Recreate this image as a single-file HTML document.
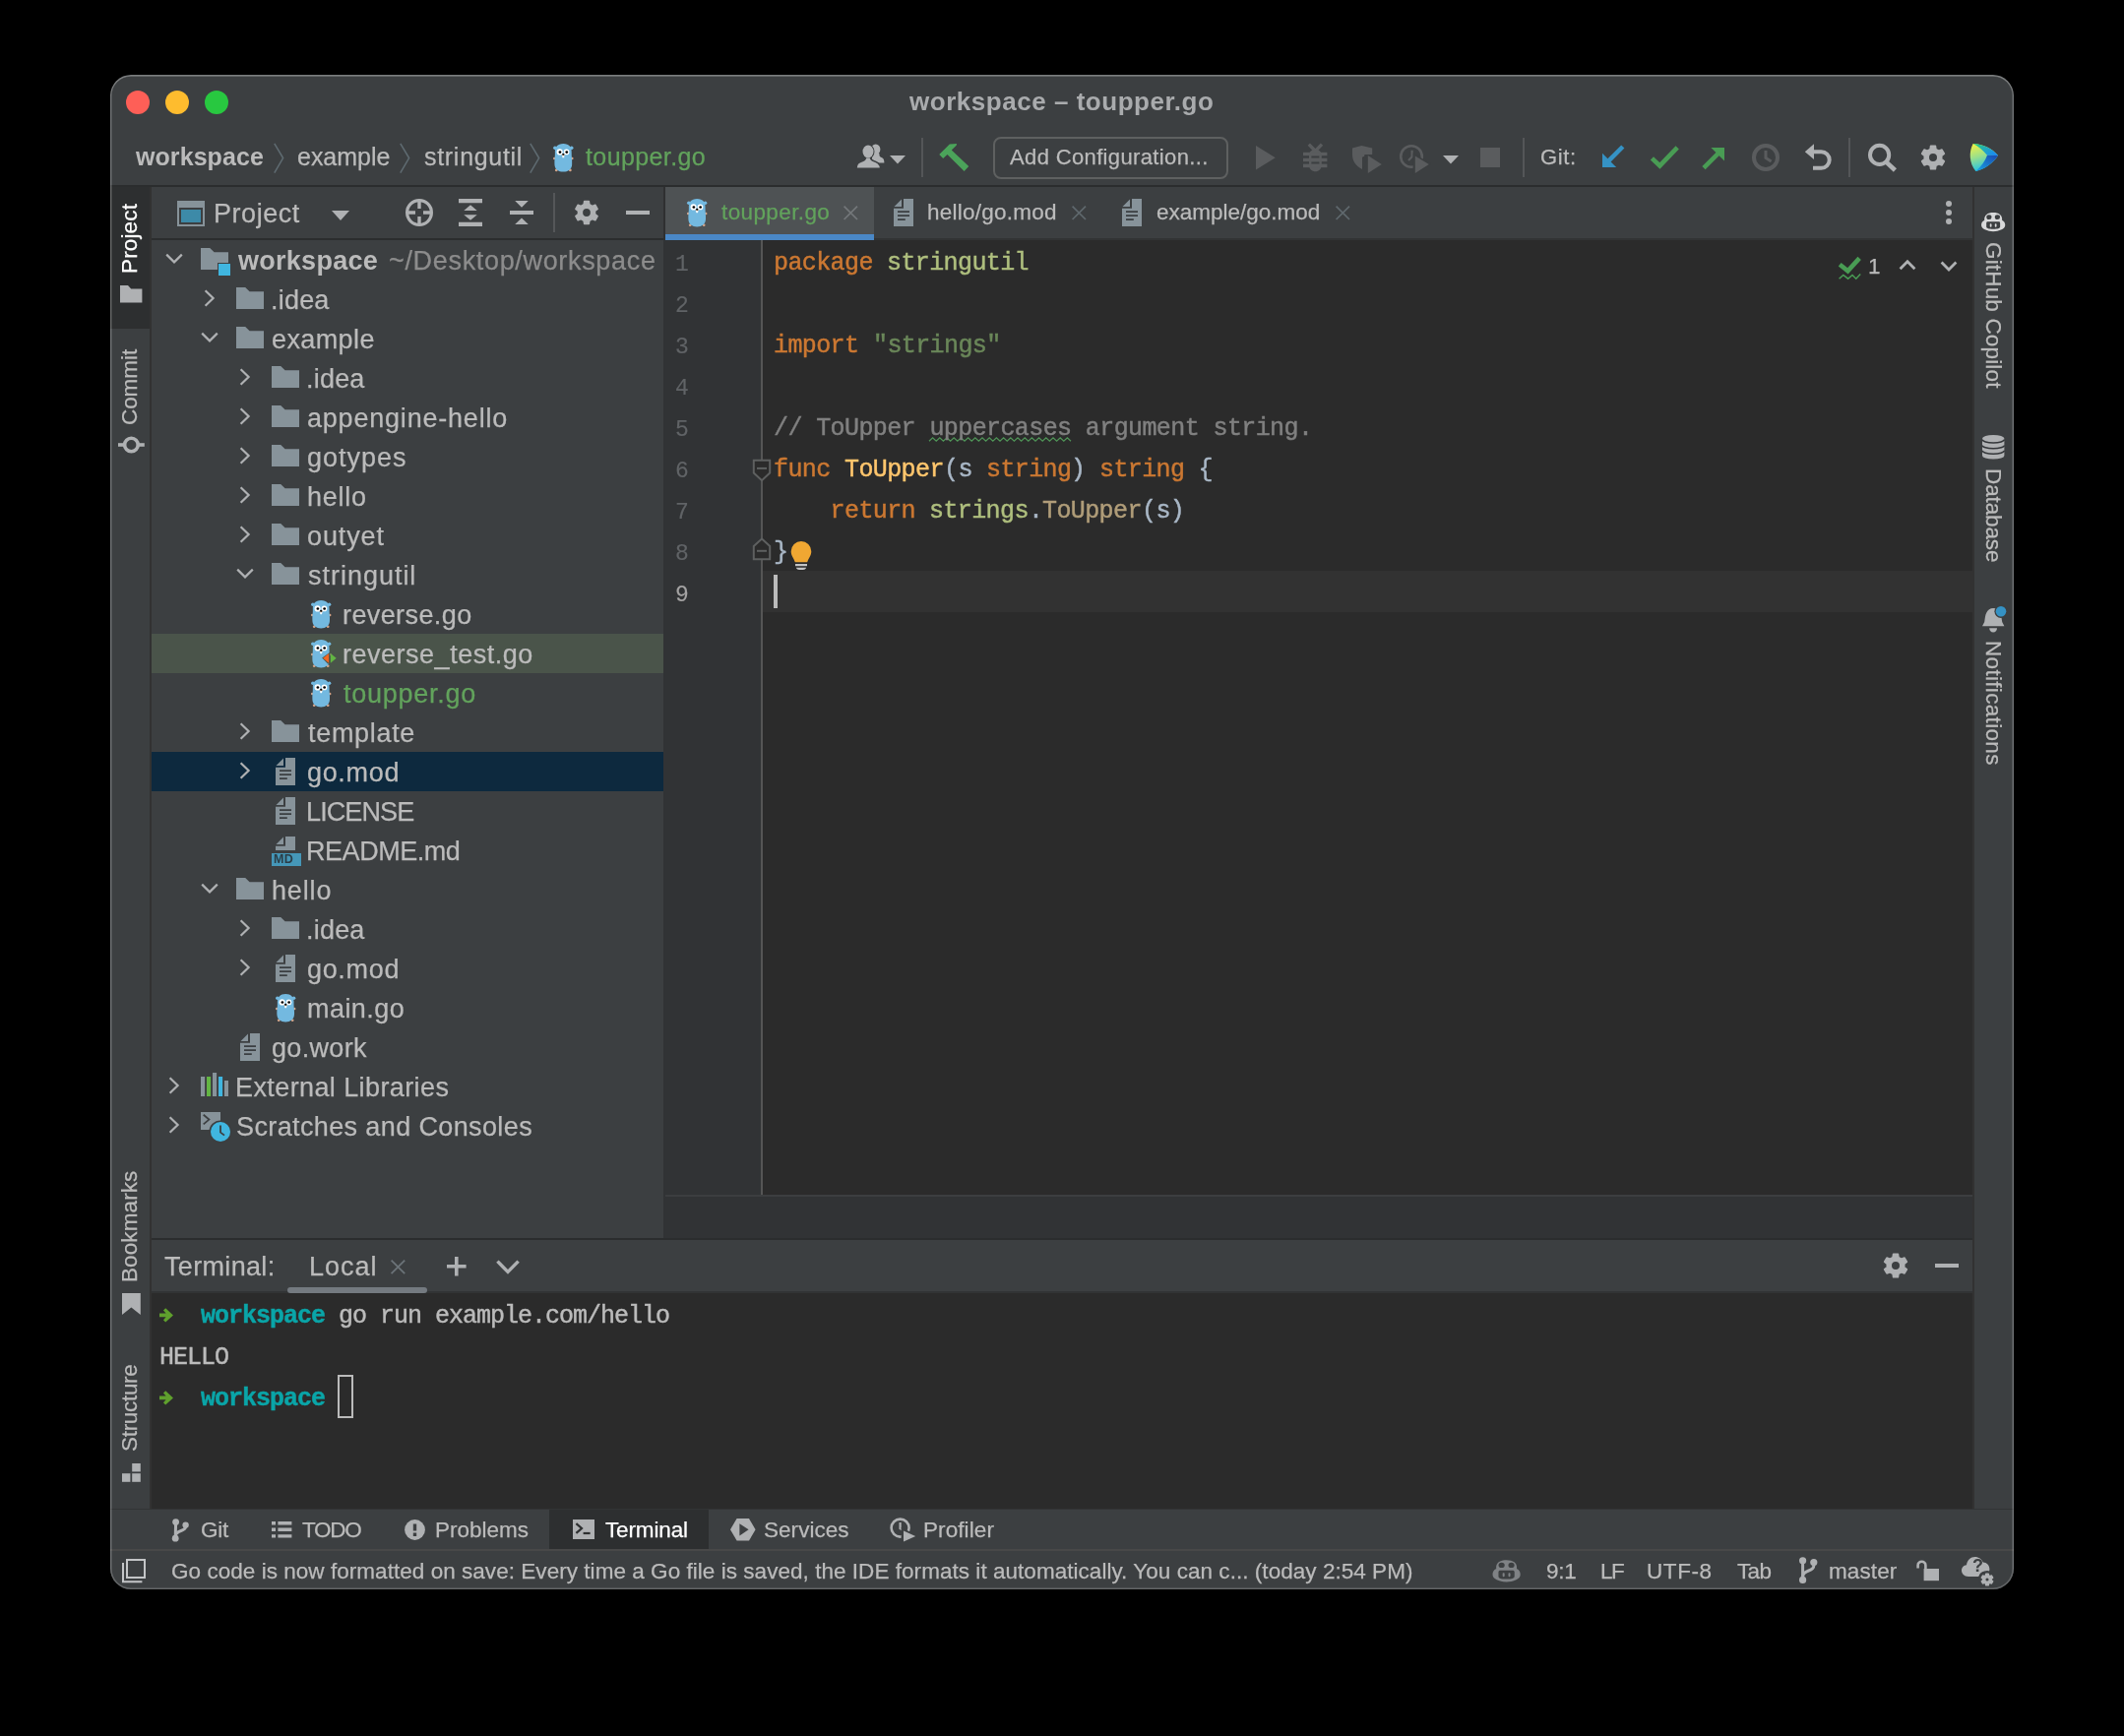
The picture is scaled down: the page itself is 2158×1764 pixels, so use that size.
<!DOCTYPE html>
<html><head><meta charset="utf-8"><title>workspace – toupper.go</title>
<style>
html,body{margin:0;padding:0;background:#000;}
body{width:2158px;height:1764px;overflow:hidden;position:relative;font-family:"Liberation Sans", sans-serif;}
#win{position:absolute;left:112px;top:76px;width:1934px;height:1539px;border-radius:21px;overflow:hidden;background:#3c3f41;}
#pg{position:absolute;left:-112px;top:-76px;width:2158px;height:1764px;}
.t{position:absolute;white-space:pre;line-height:40px;height:40px;will-change:transform;-webkit-text-stroke:0.25px currentColor;}
.m{font-family:"Liberation Mono", monospace;-webkit-text-stroke:0.45px currentColor;}
svg{position:absolute;overflow:visible;}
</style></head><body>
<div id="win"><div id="pg">
<div style="position:absolute;left:112px;top:188px;width:1934px;height:2px;background:#2b2d2e;"></div>
<div style="position:absolute;left:112px;top:190px;width:40px;height:1344px;background:#3c3f41;"></div>
<div style="position:absolute;left:112px;top:190px;width:40px;height:144px;background:#2d2f30;"></div>
<div style="position:absolute;left:152px;top:190px;width:2px;height:1344px;background:#323232;"></div>
<div style="position:absolute;left:154px;top:190px;width:520px;height:52px;background:#3c3f41;"></div>
<div style="position:absolute;left:154px;top:242px;width:520px;height:2px;background:#2b2d2e;"></div>
<div style="position:absolute;left:154px;top:244px;width:520px;height:1014px;background:#3c3f41;"></div>
<div style="position:absolute;left:674px;top:190px;width:2px;height:54px;background:#2f3031;"></div>
<div style="position:absolute;left:674px;top:244px;width:2px;height:1016px;background:#313335;"></div>
<div style="position:absolute;left:676px;top:190px;width:1328px;height:54px;background:#3c3f41;"></div>
<div style="position:absolute;left:676px;top:190px;width:212px;height:48px;background:#4e5254;"></div>
<div style="position:absolute;left:676px;top:238px;width:212px;height:6px;background:#4a88c7;"></div>
<div style="position:absolute;left:676px;top:244px;width:1328px;height:970px;background:#2b2b2b;"></div>
<div style="position:absolute;left:676px;top:244px;width:97px;height:970px;background:#313335;"></div>
<div style="position:absolute;left:773px;top:244px;width:2px;height:970px;background:#555555;"></div>
<div style="position:absolute;left:775px;top:580px;width:1229px;height:42px;background:#323232;"></div>
<div style="position:absolute;left:676px;top:1214px;width:1328px;height:2px;background:#3c3e40;"></div>
<div style="position:absolute;left:676px;top:1216px;width:1328px;height:42px;background:#313335;"></div>
<div style="position:absolute;left:154px;top:1258px;width:1850px;height:2px;background:#2b2d2e;"></div>
<div style="position:absolute;left:154px;top:1260px;width:1850px;height:52px;background:#3c3f41;"></div>
<div style="position:absolute;left:154px;top:1312px;width:1850px;height:2px;background:#323435;"></div>
<div style="position:absolute;left:154px;top:1314px;width:1850px;height:220px;background:#2b2b2b;"></div>
<div style="position:absolute;left:2004px;top:190px;width:2px;height:1344px;background:#323232;"></div>
<div style="position:absolute;left:2006px;top:190px;width:40px;height:1344px;background:#3c3f41;"></div>
<div style="position:absolute;left:112px;top:1533px;width:1934px;height:1px;background:#323435;"></div>
<div style="position:absolute;left:112px;top:1534px;width:1934px;height:40px;background:#3c3f41;"></div>
<div style="position:absolute;left:112px;top:1575px;width:1934px;height:40px;background:#3c3f41;"></div>
<svg style="left:180px;top:204px" width="28" height="26" viewBox="0 0 28 26"><path d="M0,0 H28 V26 H0 Z M2,7 V24 H26 V7 Z" fill="#87939a" fill-rule="evenodd"/><rect x="4" y="9" width="20" height="13" fill="#3d8aa8"/></svg>
<svg style="left:337px;top:214px" width="18" height="10" viewBox="0 0 18 10"><path d="M0,0 H18 L9,10 Z" fill="#afb1b3"/></svg>
<svg style="left:412px;top:202px" width="28" height="28" viewBox="0 0 28 28"><circle cx="14" cy="14" r="12.4" fill="none" stroke="#afb1b3" stroke-width="3.2"/><path d="M12.3,2 h3.4 v8 h-3.4 Z M12.3,18 h3.4 v8 h-3.4 Z M2,12.3 v3.4 h8 v-3.4 Z M18,12.3 v3.4 h8 v-3.4 Z" fill="#afb1b3"/></svg>
<svg style="left:466px;top:202px" width="24" height="28" viewBox="0 0 24 28"><path d="M0,0 H24 V4.2 H0 Z M0,23.8 H24 V28 H0 Z M12,6.3 L18.7,12 H5.3 Z M12,21.8 L18.7,16.2 H5.3 Z" fill="#afb1b3"/></svg>
<svg style="left:518px;top:202px" width="24" height="28" viewBox="0 0 24 28"><path d="M0,12 H24 V16 H0 Z M5.2,2 H18.8 L12,8.8 Z M12,19.4 L18.8,26 H5.2 Z" fill="#afb1b3"/></svg>
<div style="position:absolute;left:562px;top:196px;width:2px;height:40px;background:#555759;"></div>
<svg style="left:583px;top:203px" width="26" height="26" viewBox="-13 -13 26 26"><path d="M-2.81,-8.19 L-2.32,-11.47 L2.32,-11.47 L2.81,-8.19 L5.69,-6.53 L8.77,-7.75 L11.09,-3.72 L8.50,-1.67 L8.50,1.67 L11.09,3.72 L8.77,7.75 L5.69,6.53 L2.81,8.19 L2.32,11.47 L-2.32,11.47 L-2.81,8.19 L-5.69,6.53 L-8.77,7.75 L-11.09,3.72 L-8.50,1.67 L-8.50,-1.67 L-11.09,-3.72 L-8.77,-7.75 L-5.69,-6.53 Z M4.68,0 A4.68,4.68 0 1,0 -4.68,0 A4.68,4.68 0 1,0 4.68,0 Z" fill="#afb1b3" fill-rule="evenodd" stroke="#afb1b3" stroke-width="1.6" stroke-linejoin="round"/></svg>
<div style="position:absolute;left:636px;top:214px;width:24px;height:4.4px;background:#afb1b3;"></div>
<div style="position:absolute;left:154px;top:644px;width:520px;height:40px;background:#4a544a;"></div>
<div style="position:absolute;left:154px;top:764px;width:520px;height:40px;background:#0d293e;"></div>
<svg style="left:167px;top:256.5px" width="20" height="12" viewBox="0 0 20 12"><path d="M2.2,1.6 L10,9.4 L17.8,1.6" fill="none" stroke="#afb1b3" stroke-width="2.2"/></svg>
<svg style="left:204px;top:252px" width="28" height="22" viewBox="0 0 28 22"><path d="M0,0 H9.2 L13.6,4.2 H28 V22 H0 Z" fill="#87939a"/></svg>
<div style="position:absolute;left:220.5px;top:266.5px;width:15px;height:15px;background:#3c3f41;"></div>
<div style="position:absolute;left:222px;top:268px;width:12px;height:12px;background:#40b6e0;"></div>
<svg style="left:206.6px;top:293.1px" width="12" height="20" viewBox="0 0 12 20"><path d="M1.6,2.2 L9.6,10 L1.6,17.8" fill="none" stroke="#afb1b3" stroke-width="2.2"/></svg>
<svg style="left:240px;top:292px" width="28" height="22" viewBox="0 0 28 22"><path d="M0,0 H9.2 L13.6,4.2 H28 V22 H0 Z" fill="#87939a"/></svg>
<svg style="left:202.6px;top:336.5px" width="20" height="12" viewBox="0 0 20 12"><path d="M2.2,1.6 L10,9.4 L17.8,1.6" fill="none" stroke="#afb1b3" stroke-width="2.2"/></svg>
<svg style="left:240px;top:332px" width="28" height="22" viewBox="0 0 28 22"><path d="M0,0 H9.2 L13.6,4.2 H28 V22 H0 Z" fill="#87939a"/></svg>
<svg style="left:242.6px;top:373.1px" width="12" height="20" viewBox="0 0 12 20"><path d="M1.6,2.2 L9.6,10 L1.6,17.8" fill="none" stroke="#afb1b3" stroke-width="2.2"/></svg>
<svg style="left:276px;top:372px" width="28" height="22" viewBox="0 0 28 22"><path d="M0,0 H9.2 L13.6,4.2 H28 V22 H0 Z" fill="#87939a"/></svg>
<svg style="left:242.6px;top:413.1px" width="12" height="20" viewBox="0 0 12 20"><path d="M1.6,2.2 L9.6,10 L1.6,17.8" fill="none" stroke="#afb1b3" stroke-width="2.2"/></svg>
<svg style="left:276px;top:412px" width="28" height="22" viewBox="0 0 28 22"><path d="M0,0 H9.2 L13.6,4.2 H28 V22 H0 Z" fill="#87939a"/></svg>
<svg style="left:242.6px;top:453.1px" width="12" height="20" viewBox="0 0 12 20"><path d="M1.6,2.2 L9.6,10 L1.6,17.8" fill="none" stroke="#afb1b3" stroke-width="2.2"/></svg>
<svg style="left:276px;top:452px" width="28" height="22" viewBox="0 0 28 22"><path d="M0,0 H9.2 L13.6,4.2 H28 V22 H0 Z" fill="#87939a"/></svg>
<svg style="left:242.6px;top:493.1px" width="12" height="20" viewBox="0 0 12 20"><path d="M1.6,2.2 L9.6,10 L1.6,17.8" fill="none" stroke="#afb1b3" stroke-width="2.2"/></svg>
<svg style="left:276px;top:492px" width="28" height="22" viewBox="0 0 28 22"><path d="M0,0 H9.2 L13.6,4.2 H28 V22 H0 Z" fill="#87939a"/></svg>
<svg style="left:242.6px;top:533.1px" width="12" height="20" viewBox="0 0 12 20"><path d="M1.6,2.2 L9.6,10 L1.6,17.8" fill="none" stroke="#afb1b3" stroke-width="2.2"/></svg>
<svg style="left:276px;top:532px" width="28" height="22" viewBox="0 0 28 22"><path d="M0,0 H9.2 L13.6,4.2 H28 V22 H0 Z" fill="#87939a"/></svg>
<svg style="left:238.6px;top:576.5px" width="20" height="12" viewBox="0 0 20 12"><path d="M2.2,1.6 L10,9.4 L17.8,1.6" fill="none" stroke="#afb1b3" stroke-width="2.2"/></svg>
<svg style="left:276px;top:572px" width="28" height="22" viewBox="0 0 28 22"><path d="M0,0 H9.2 L13.6,4.2 H28 V22 H0 Z" fill="#87939a"/></svg>
<svg style="left:316px;top:609.7px" width="20.4" height="28.4" viewBox="0 0 270 378"><circle cx="24" cy="57" r="24" fill="#73b9e0"/><circle cx="246" cy="57" r="24" fill="#73b9e0"/><circle cx="15" cy="199" r="16" fill="#d4a58a"/><circle cx="255" cy="199" r="16" fill="#d4a58a"/><circle cx="42" cy="356" r="18" fill="#d4a58a"/><circle cx="228" cy="356" r="18" fill="#d4a58a"/><path d="M135,0 C215,0 250,50 246,120 C244,170 256,220 252,280 C248,345 200,378 135,378 C70,378 22,345 18,280 C14,220 26,170 24,120 C20,50 55,0 135,0 Z" fill="#73b9e0"/><circle cx="87" cy="112" r="41" fill="#fff"/><circle cx="178" cy="112" r="38" fill="#fff"/><circle cx="91" cy="113" r="18" fill="#000"/><circle cx="181" cy="113" r="18" fill="#000"/><rect x="122" y="158" width="26" height="32" rx="6" fill="#fff"/><ellipse cx="135" cy="150" rx="22" ry="13" fill="#d9b79a"/><ellipse cx="135" cy="143" rx="15" ry="12" fill="#000"/></svg>
<svg style="left:316px;top:649.7px" width="20.4" height="28.4" viewBox="0 0 270 378"><circle cx="24" cy="57" r="24" fill="#73b9e0"/><circle cx="246" cy="57" r="24" fill="#73b9e0"/><circle cx="15" cy="199" r="16" fill="#d4a58a"/><circle cx="255" cy="199" r="16" fill="#d4a58a"/><circle cx="42" cy="356" r="18" fill="#d4a58a"/><circle cx="228" cy="356" r="18" fill="#d4a58a"/><path d="M135,0 C215,0 250,50 246,120 C244,170 256,220 252,280 C248,345 200,378 135,378 C70,378 22,345 18,280 C14,220 26,170 24,120 C20,50 55,0 135,0 Z" fill="#73b9e0"/><circle cx="87" cy="112" r="41" fill="#fff"/><circle cx="178" cy="112" r="38" fill="#fff"/><circle cx="91" cy="113" r="18" fill="#000"/><circle cx="181" cy="113" r="18" fill="#000"/><rect x="122" y="158" width="26" height="32" rx="6" fill="#fff"/><ellipse cx="135" cy="150" rx="22" ry="13" fill="#d9b79a"/><ellipse cx="135" cy="143" rx="15" ry="12" fill="#000"/></svg>
<svg style="left:327px;top:662px" width="16" height="14" viewBox="0 0 16 14"><path d="M8.6,0.6 V12.4 H6 L0.2,6.5 Z" fill="#4a544a"/><path d="M1.2,6.7 L7.1,2 V11.7 Z" fill="#f26522"/><path d="M8.8,2 L14.7,6.7 L8.8,11.8 Z" fill="#62b543"/></svg>
<svg style="left:316px;top:689.7px" width="20.4" height="28.4" viewBox="0 0 270 378"><circle cx="24" cy="57" r="24" fill="#73b9e0"/><circle cx="246" cy="57" r="24" fill="#73b9e0"/><circle cx="15" cy="199" r="16" fill="#d4a58a"/><circle cx="255" cy="199" r="16" fill="#d4a58a"/><circle cx="42" cy="356" r="18" fill="#d4a58a"/><circle cx="228" cy="356" r="18" fill="#d4a58a"/><path d="M135,0 C215,0 250,50 246,120 C244,170 256,220 252,280 C248,345 200,378 135,378 C70,378 22,345 18,280 C14,220 26,170 24,120 C20,50 55,0 135,0 Z" fill="#73b9e0"/><circle cx="87" cy="112" r="41" fill="#fff"/><circle cx="178" cy="112" r="38" fill="#fff"/><circle cx="91" cy="113" r="18" fill="#000"/><circle cx="181" cy="113" r="18" fill="#000"/><rect x="122" y="158" width="26" height="32" rx="6" fill="#fff"/><ellipse cx="135" cy="150" rx="22" ry="13" fill="#d9b79a"/><ellipse cx="135" cy="143" rx="15" ry="12" fill="#000"/></svg>
<svg style="left:242.6px;top:733.1px" width="12" height="20" viewBox="0 0 12 20"><path d="M1.6,2.2 L9.6,10 L1.6,17.8" fill="none" stroke="#afb1b3" stroke-width="2.2"/></svg>
<svg style="left:276px;top:732px" width="28" height="22" viewBox="0 0 28 22"><path d="M0,0 H9.2 L13.6,4.2 H28 V22 H0 Z" fill="#87939a"/></svg>
<svg style="left:242.6px;top:773.1px" width="12" height="20" viewBox="0 0 12 20"><path d="M1.6,2.2 L9.6,10 L1.6,17.8" fill="none" stroke="#afb1b3" stroke-width="2.2"/></svg>
<svg style="left:280px;top:770px" width="20" height="28" viewBox="0 0 20 28"><path d="M10,0 H20 V28 H0 V9.7 H10 Z" fill="#87939a"/><path d="M8,0.5 V8 H0.5 Z" fill="#87939a"/><path d="M4,12.2 H16 V14 H4 Z M4,16.2 H16 V18 H4 Z M4,20.3 H11.8 V22 H4 Z" fill="#3b3f42"/></svg>
<svg style="left:280px;top:810px" width="20" height="28" viewBox="0 0 20 28"><path d="M10,0 H20 V28 H0 V9.7 H10 Z" fill="#87939a"/><path d="M8,0.5 V8 H0.5 Z" fill="#87939a"/><path d="M4,12.2 H16 V14 H4 Z M4,16.2 H16 V18 H4 Z M4,20.3 H11.8 V22 H4 Z" fill="#3b3f42"/></svg>
<svg style="left:280px;top:850px" width="20" height="28" viewBox="0 0 20 28"><path d="M10,0 H20 V14 H0 V9.7 H10 Z" fill="#87939a"/><path d="M8,0.5 V8 H0.5 Z" fill="#87939a"/></svg>
<div style="position:absolute;left:276px;top:866.6px;width:30px;height:13.4px;background:#4597b8;"></div>
<span style="position:absolute;left:277.5px;top:866px;font-size:12.5px;line-height:14px;font-weight:700;color:#2b3d47;letter-spacing:0.3px;will-change:transform;">MD</span>
<svg style="left:202.6px;top:896.5px" width="20" height="12" viewBox="0 0 20 12"><path d="M2.2,1.6 L10,9.4 L17.8,1.6" fill="none" stroke="#afb1b3" stroke-width="2.2"/></svg>
<svg style="left:240px;top:892px" width="28" height="22" viewBox="0 0 28 22"><path d="M0,0 H9.2 L13.6,4.2 H28 V22 H0 Z" fill="#87939a"/></svg>
<svg style="left:242.6px;top:933.1px" width="12" height="20" viewBox="0 0 12 20"><path d="M1.6,2.2 L9.6,10 L1.6,17.8" fill="none" stroke="#afb1b3" stroke-width="2.2"/></svg>
<svg style="left:276px;top:932px" width="28" height="22" viewBox="0 0 28 22"><path d="M0,0 H9.2 L13.6,4.2 H28 V22 H0 Z" fill="#87939a"/></svg>
<svg style="left:242.6px;top:973.1px" width="12" height="20" viewBox="0 0 12 20"><path d="M1.6,2.2 L9.6,10 L1.6,17.8" fill="none" stroke="#afb1b3" stroke-width="2.2"/></svg>
<svg style="left:280px;top:970px" width="20" height="28" viewBox="0 0 20 28"><path d="M10,0 H20 V28 H0 V9.7 H10 Z" fill="#87939a"/><path d="M8,0.5 V8 H0.5 Z" fill="#87939a"/><path d="M4,12.2 H16 V14 H4 Z M4,16.2 H16 V18 H4 Z M4,20.3 H11.8 V22 H4 Z" fill="#3b3f42"/></svg>
<svg style="left:280px;top:1009.7px" width="20.4" height="28.4" viewBox="0 0 270 378"><circle cx="24" cy="57" r="24" fill="#73b9e0"/><circle cx="246" cy="57" r="24" fill="#73b9e0"/><circle cx="15" cy="199" r="16" fill="#d4a58a"/><circle cx="255" cy="199" r="16" fill="#d4a58a"/><circle cx="42" cy="356" r="18" fill="#d4a58a"/><circle cx="228" cy="356" r="18" fill="#d4a58a"/><path d="M135,0 C215,0 250,50 246,120 C244,170 256,220 252,280 C248,345 200,378 135,378 C70,378 22,345 18,280 C14,220 26,170 24,120 C20,50 55,0 135,0 Z" fill="#73b9e0"/><circle cx="87" cy="112" r="41" fill="#fff"/><circle cx="178" cy="112" r="38" fill="#fff"/><circle cx="91" cy="113" r="18" fill="#000"/><circle cx="181" cy="113" r="18" fill="#000"/><rect x="122" y="158" width="26" height="32" rx="6" fill="#fff"/><ellipse cx="135" cy="150" rx="22" ry="13" fill="#d9b79a"/><ellipse cx="135" cy="143" rx="15" ry="12" fill="#000"/></svg>
<svg style="left:244px;top:1050px" width="20" height="28" viewBox="0 0 20 28"><path d="M10,0 H20 V28 H0 V9.7 H10 Z" fill="#87939a"/><path d="M8,0.5 V8 H0.5 Z" fill="#87939a"/><path d="M4,12.2 H16 V14 H4 Z M4,16.2 H16 V18 H4 Z M4,20.3 H11.8 V22 H4 Z" fill="#3b3f42"/></svg>
<svg style="left:171px;top:1093.1px" width="12" height="20" viewBox="0 0 12 20"><path d="M1.6,2.2 L9.6,10 L1.6,17.8" fill="none" stroke="#afb1b3" stroke-width="2.2"/></svg>
<svg style="left:204px;top:1090px" width="28" height="24" viewBox="0 0 28 24"><rect x="0" y="4" width="4.1" height="20" fill="#87939a"/><rect x="6" y="4" width="4.1" height="20" fill="#62b543"/><rect x="12" y="0" width="4.1" height="24" fill="#87939a"/><rect x="18" y="4" width="4.1" height="20" fill="#40b6e0"/><rect x="24" y="8" width="4" height="16" fill="#87939a"/></svg>
<svg style="left:171px;top:1133.1px" width="12" height="20" viewBox="0 0 12 20"><path d="M1.6,2.2 L9.6,10 L1.6,17.8" fill="none" stroke="#afb1b3" stroke-width="2.2"/></svg>
<svg style="left:204px;top:1130px" width="32" height="32" viewBox="0 0 32 32"><rect x="0" y="0" width="20" height="18" fill="#87939a"/><path d="M2.7,2.8 L8.4,7.6 L2.7,12.4" fill="none" stroke="#3c3f41" stroke-width="1.8"/><circle cx="20" cy="20" r="11.6" fill="#3c3f41"/><circle cx="20" cy="20" r="10" fill="#40b6e0"/><path d="M20,13.5 V20.6 L24,23.6" fill="none" stroke="#3c3f41" stroke-width="1.8"/></svg>
<div style="position:absolute;left:112px;top:190px;width:40px;height:144px;background:#2d2f30;"></div>
<svg style="left:122px;top:290.3px" width="22.4" height="17.6" viewBox="0 0 22.4 17.6"><path d="M0,0 H8 L11.2,3.6 H22.4 V17.6 H0 Z" fill="#afb1b3"/></svg>
<svg style="left:119.6px;top:442.5px" width="26.8" height="18" viewBox="0 0 26.8 18"><path d="M0,7.2 H26.8 V10.8 H0 Z" fill="#afb1b3"/><circle cx="13.4" cy="9" r="6.8" fill="#3c3f41" stroke="#afb1b3" stroke-width="3.6"/></svg>
<svg style="left:123.6px;top:1313.6px" width="18.8" height="22" viewBox="0 0 18.8 22"><path d="M0,0 H18.8 V22 L9.4,14.4 L0,22 Z" fill="#afb1b3"/></svg>
<svg style="left:123.8px;top:1487px" width="19" height="19" viewBox="0 0 19 19"><rect x="10.2" y="0" width="8.6" height="8.4" fill="#afb1b3"/><rect x="0" y="10.2" width="8.4" height="8.6" fill="#afb1b3"/><rect x="10.2" y="10.2" width="8.6" height="8.6" fill="#afb1b3"/></svg>
<svg style="left:2013px;top:215.7px" width="24.3" height="18.9" viewBox="0 0 50 39"><path d="M11,4 C17,-1 33,-1 39,4 C43,7 44,12 43.4,16 C48,18 50,22 50,26.5 C50,31 46.6,34 42.6,35.8 C31,41 19,41 7.4,35.8 C3.4,34 0,31 0,26.5 C0,22 2,18 6.6,16 C6,12 7,7 11,4 Z" fill="#d8d9da"/><ellipse cx="16.2" cy="9.6" rx="5.4" ry="4.7" fill="#3c3f41"/><ellipse cx="33.8" cy="9.6" rx="5.4" ry="4.7" fill="#3c3f41"/><path d="M10.6,22 C10.6,20 12,19 14,19 H36 C38,19 39.4,20 39.4,22 V30 C39.4,33 34,34.6 25,34.6 C16,34.6 10.6,33 10.6,30 Z" fill="#3c3f41"/><rect x="18" y="23.4" width="3.6" height="7" rx="1.4" fill="#d8d9da"/><rect x="28.4" y="23.4" width="3.6" height="7" rx="1.4" fill="#d8d9da"/></svg>
<svg style="left:2013.8px;top:442.4px" width="22.4" height="24.6" viewBox="0 0 22.4 24.6"><path d="M0,3.7 A11.2,3.7 0 0 1 22.4,3.7 V20.9 A11.2,3.7 0 0 1 0,20.9 Z" fill="#afb1b3"/><g fill="none" stroke="#34373a" stroke-width="1.5"><path d="M0,4.6 A11.2,3.4 0 0 0 22.4,4.6"/><path d="M0,10.4 A11.2,3.4 0 0 0 22.4,10.4"/><path d="M0,15.8 A11.2,3.4 0 0 0 22.4,15.8"/></g></svg>
<svg style="left:2013.8px;top:617.7px" width="26" height="26" viewBox="0 0 26 26"><path d="M0,18.3 L2.2,14 C2.8,10 3,7 4.2,4.8 C5.6,2 8,0 11.2,0 C14.4,0 16.8,2 18.2,4.8 C19.4,7 19.6,10 20.2,14 L22.4,18.3 Z" fill="#afb1b3"/><path d="M7.2,20.3 H15 C15,22.8 13.4,24.6 11.1,24.6 C8.8,24.6 7.2,22.8 7.2,20.3 Z" fill="#afb1b3"/><circle cx="19" cy="3.3" r="6.6" fill="#3c3f41"/><circle cx="19" cy="3.3" r="5.3" fill="#3592c4"/></svg>
<div style="position:absolute;left:888px;top:242px;width:1116px;height:2px;background:#323435;"></div>
<svg style="left:697.8px;top:201.7px" width="20.4" height="28.4" viewBox="0 0 270 378"><circle cx="24" cy="57" r="24" fill="#73b9e0"/><circle cx="246" cy="57" r="24" fill="#73b9e0"/><circle cx="15" cy="199" r="16" fill="#d4a58a"/><circle cx="255" cy="199" r="16" fill="#d4a58a"/><circle cx="42" cy="356" r="18" fill="#d4a58a"/><circle cx="228" cy="356" r="18" fill="#d4a58a"/><path d="M135,0 C215,0 250,50 246,120 C244,170 256,220 252,280 C248,345 200,378 135,378 C70,378 22,345 18,280 C14,220 26,170 24,120 C20,50 55,0 135,0 Z" fill="#73b9e0"/><circle cx="87" cy="112" r="41" fill="#fff"/><circle cx="178" cy="112" r="38" fill="#fff"/><circle cx="91" cy="113" r="18" fill="#000"/><circle cx="181" cy="113" r="18" fill="#000"/><rect x="122" y="158" width="26" height="32" rx="6" fill="#fff"/><ellipse cx="135" cy="150" rx="22" ry="13" fill="#d9b79a"/><ellipse cx="135" cy="143" rx="15" ry="12" fill="#000"/></svg>
<svg style="left:856.9000000000001px;top:208.89999999999998px" width="14.6" height="14.6" viewBox="0 0 14.6 14.6"><path d="M0.6,0.6 L14.0,14.0 M14.0,0.6 L0.6,14.0" stroke="#73777a" stroke-width="1.7" fill="none"/></svg>
<svg style="left:908px;top:202px" width="20" height="28" viewBox="0 0 20 28"><path d="M10,0 H20 V28 H0 V9.7 H10 Z" fill="#87939a"/><path d="M8,0.5 V8 H0.5 Z" fill="#87939a"/><path d="M4,12.2 H16 V14 H4 Z M4,16.2 H16 V18 H4 Z M4,20.3 H11.8 V22 H4 Z" fill="#3b3f42"/></svg>
<svg style="left:1088.6000000000001px;top:208.89999999999998px" width="14.6" height="14.6" viewBox="0 0 14.6 14.6"><path d="M0.6,0.6 L14.0,14.0 M14.0,0.6 L0.6,14.0" stroke="#5f686d" stroke-width="1.7" fill="none"/></svg>
<svg style="left:1140px;top:202px" width="20" height="28" viewBox="0 0 20 28"><path d="M10,0 H20 V28 H0 V9.7 H10 Z" fill="#87939a"/><path d="M8,0.5 V8 H0.5 Z" fill="#87939a"/><path d="M4,12.2 H16 V14 H4 Z M4,16.2 H16 V18 H4 Z M4,20.3 H11.8 V22 H4 Z" fill="#3b3f42"/></svg>
<svg style="left:1356.5px;top:208.89999999999998px" width="14.6" height="14.6" viewBox="0 0 14.6 14.6"><path d="M0.6,0.6 L14.0,14.0 M14.0,0.6 L0.6,14.0" stroke="#5f686d" stroke-width="1.7" fill="none"/></svg>
<div style="position:absolute;left:1976.9px;top:203.9px;width:6.2px;height:6.2px;border-radius:50%;background:#afb1b3"></div>
<div style="position:absolute;left:1976.9px;top:212.9px;width:6.2px;height:6.2px;border-radius:50%;background:#afb1b3"></div>
<div style="position:absolute;left:1976.9px;top:221.9px;width:6.2px;height:6.2px;border-radius:50%;background:#afb1b3"></div>
<div style="position:absolute;left:786.2px;top:584.2px;width:3.6px;height:33.6px;background:#bbbbbb;"></div>
<svg style="left:764px;top:466px" width="20" height="24" viewBox="0 0 20 24"><path d="M1.8,1.8 H18.2 V14.6 L10,22.2 L1.8,14.6 Z" fill="#2b2b2b" stroke="#5e6060" stroke-width="2"/><path d="M5,9.9 H15" stroke="#5e6060" stroke-width="2"/></svg>
<svg style="left:764px;top:546px" width="20" height="24" viewBox="0 0 20 24"><path d="M10,1.6 L18.2,9 V22.2 H1.8 V9 Z" fill="#2b2b2b" stroke="#5e6060" stroke-width="2"/><path d="M5,13.8 H15" stroke="#5e6060" stroke-width="2"/></svg>
<svg style="left:803px;top:548.8px" width="22" height="32" viewBox="0 0 22 32"><path d="M11,1 A10.3,10.3 0 0 1 21.3,11.3 C21.3,15.5 18.6,18 17.2,22.2 H4.8 C3.4,18 0.7,15.5 0.7,11.3 A10.3,10.3 0 0 1 11,1 Z" fill="#f0a732"/><rect x="5" y="24" width="12" height="2.2" fill="#c4c4c4"/><path d="M5.8,27.8 H16.2 C15.6,29.4 14.4,30 13,30 H9 C7.6,30 6.4,29.4 5.8,27.8 Z" fill="#c4c4c4"/></svg>
<svg style="left:944.4px;top:444px" width="146" height="6" viewBox="0 0 146 6"><path d="M0.0,4.2 L3.6,0.8 L7.2,4.2 L10.8,0.8 L14.4,4.2 L18.0,0.8 L21.6,4.2 L25.2,0.8 L28.8,4.2 L32.4,0.8 L36.0,4.2 L39.6,0.8 L43.2,4.2 L46.8,0.8 L50.4,4.2 L54.0,0.8 L57.6,4.2 L61.2,0.8 L64.8,4.2 L68.4,0.8 L72.0,4.2 L75.6,0.8 L79.2,4.2 L82.8,0.8 L86.4,4.2 L90.0,0.8 L93.6,4.2 L97.2,0.8 L100.8,4.2 L104.4,0.8 L108.0,4.2 L111.6,0.8 L115.2,4.2 L118.8,0.8 L122.4,4.2 L126.0,0.8 L129.6,4.2 L133.2,0.8 L136.8,4.2 L140.4,0.8 L144.0,4.2" fill="none" stroke="#4f9457" stroke-width="1.3"/></svg>
<svg style="left:1866px;top:258px" width="28" height="28" viewBox="0 0 28 28"><path d="M3.2,10.8 L11.4,17.4 L23.2,4.4" fill="none" stroke="#499c54" stroke-width="4.6"/><path d="M2.6,25.2 L6.8,21.4 L11.6,25.2 L16,21.4 L19.8,25.2 L24.2,20.6" fill="none" stroke="#499c54" stroke-width="1.5"/></svg>
<svg style="left:1928px;top:262px" width="20" height="14" viewBox="0 0 20 14"><path d="M2.6,11.2 L10,3.8 L17.4,11.2" fill="none" stroke="#afb1b3" stroke-width="2.8"/></svg>
<svg style="left:1970px;top:264px" width="20" height="14" viewBox="0 0 20 14"><path d="M2.6,2.6 L10,10 L17.4,2.6" fill="none" stroke="#afb1b3" stroke-width="2.8"/></svg>
<svg style="left:396.8px;top:1279.8px" width="14.8" height="14.8" viewBox="0 0 14.8 14.8"><path d="M0.6,0.6 L14.200000000000001,14.200000000000001 M14.200000000000001,0.6 L0.6,14.200000000000001" stroke="#6b7378" stroke-width="1.8" fill="none"/></svg>
<div style="position:absolute;left:292px;top:1307.6px;width:142.4px;height:6.4px;border-radius:3.2px;background:#747a80"></div>
<svg style="left:454.2px;top:1276.6px" width="19.6" height="19.6" viewBox="0 0 19.6 19.6"><path d="M8,0 H11.6 V8 H19.6 V11.6 H11.6 V19.6 H8 V11.6 H0 V8 H8 Z" fill="#afb1b3"/></svg>
<svg style="left:503px;top:1279px" width="26" height="17" viewBox="0 0 26 17"><path d="M2.4,2.6 L13,13.4 L23.6,2.6" fill="none" stroke="#afb1b3" stroke-width="3.4"/></svg>
<svg style="left:1913px;top:1273px" width="26" height="26" viewBox="-13 -13 26 26"><path d="M-2.88,-8.40 L-2.38,-11.76 L2.38,-11.76 L2.88,-8.40 L5.84,-6.69 L8.99,-7.95 L11.38,-3.82 L8.71,-1.71 L8.71,1.71 L11.38,3.82 L8.99,7.95 L5.84,6.69 L2.88,8.40 L2.38,11.76 L-2.38,11.76 L-2.88,8.40 L-5.84,6.69 L-8.99,7.95 L-11.38,3.82 L-8.71,1.71 L-8.71,-1.71 L-11.38,-3.82 L-8.99,-7.95 L-5.84,-6.69 Z M4.80,0 A4.80,4.80 0 1,0 -4.80,0 A4.80,4.80 0 1,0 4.80,0 Z" fill="#afb1b3" fill-rule="evenodd" stroke="#afb1b3" stroke-width="1.6" stroke-linejoin="round"/></svg>
<div style="position:absolute;left:1966px;top:1283.6px;width:24px;height:4.4px;background:#afb1b3;"></div>
<svg style="left:162.2px;top:1328.6px" width="14.4" height="14.8" viewBox="0 0 14.4 14.8"><path d="M0,5.6 H6.6 L4,2.6 L6.2,0.2 L14,7.4 L6.2,14.6 L4,12.2 L6.6,9.2 H0 Z" fill="#5fa02d"/></svg>
<svg style="left:162.2px;top:1412.6px" width="14.4" height="14.8" viewBox="0 0 14.4 14.8"><path d="M0,5.6 H6.6 L4,2.6 L6.2,0.2 L14,7.4 L6.2,14.6 L4,12.2 L6.6,9.2 H0 Z" fill="#5fa02d"/></svg>
<div style="position:absolute;left:343px;top:1397.2px;width:16.4px;height:43.8px;box-sizing:border-box;border:2px solid #bbbbbb"></div>
<div style="position:absolute;left:558px;top:1534px;width:162px;height:40px;background:#2d2f30;"></div>
<svg style="left:174px;top:1543.2px" width="18" height="24" viewBox="0 0 18 24"><g fill="none" stroke="#afb1b3" stroke-width="3"><path d="M4.6,4 L4.2,20"/><path d="M14.6,7 V8.6 C14.6,13.4 4.6,11.6 4.4,17.4"/></g><circle cx="4.6" cy="3.6" r="3.4" fill="#afb1b3"/><circle cx="4.2" cy="20.2" r="3.4" fill="#afb1b3"/><circle cx="14.6" cy="6.6" r="3.2" fill="#afb1b3"/></svg>
<svg style="left:275.8px;top:1546px" width="20.4" height="16.6" viewBox="0 0 20.4 16.6"><path d="M0,0 H4 V3.4 H0 Z M6.4,0 H20.4 V3.4 H6.4 Z M0,6.6 H4 V10 H0 Z M6.4,6.6 H20.4 V10 H6.4 Z M0,13.2 H4 V16.6 H0 Z M6.4,13.2 H20.4 V16.6 H6.4 Z" fill="#afb1b3"/></svg>
<svg style="left:410.8px;top:1543.8px" width="21" height="21" viewBox="0 0 21 21"><circle cx="10.5" cy="10.5" r="10.4" fill="#afb1b3"/><path d="M8.8,4.4 H12.2 V11.6 H8.8 Z M8.8,13.6 H12.2 V17 H8.8 Z" fill="#3c3f41"/></svg>
<svg style="left:582px;top:1544px" width="22" height="20" viewBox="0 0 22 20"><rect x="0" y="0" width="22" height="20" fill="#afb1b3"/><path d="M3.4,4.2 L9,9 L3.4,13.8" fill="none" stroke="#2d2f30" stroke-width="2.2"/><path d="M10.6,14 H17.6" stroke="#2d2f30" stroke-width="2.2"/></svg>
<svg style="left:742px;top:1543.4px" width="25.6" height="22.6" viewBox="0 0 25.6 22.6"><path d="M6.6,0 H19 L25.6,11.3 L19,22.6 H6.6 L0,11.3 Z" fill="#afb1b3"/><path d="M9.4,5.2 L18.6,11.3 L9.4,17.4 Z" fill="#3c3f41"/></svg>
<svg style="left:903.6px;top:1542.4px" width="26.4" height="25.2" viewBox="0 0 26.4 25.2"><circle cx="10.6" cy="10.6" r="9" fill="none" stroke="#afb1b3" stroke-width="2.6"/><path d="M10.6,5 V11.2 L14.4,13.6" fill="none" stroke="#afb1b3" stroke-width="2.2"/><path d="M11.6,10 L27,17.8 L11.6,25.6 Z" fill="#3c3f41"/><path d="M14,13.4 L26.2,18.9 L14,24.6 Z" fill="#afb1b3"/></svg>
<div style="position:absolute;left:112px;top:1574px;width:1934px;height:2px;background:#484848;"></div>
<svg style="left:123px;top:1583px" width="26" height="26" viewBox="0 0 26 26"><rect x="6" y="2" width="18" height="18" fill="none" stroke="#c3c5c7" stroke-width="2"/><path d="M2,5 V24.2 H21.4" fill="none" stroke="#c3c5c7" stroke-width="2"/></svg>
<svg style="left:1515.5px;top:1585px" width="29.2" height="22" viewBox="0 0 50 39"><path d="M11,4 C17,-1 33,-1 39,4 C43,7 44,12 43.4,16 C48,18 50,22 50,26.5 C50,31 46.6,34 42.6,35.8 C31,41 19,41 7.4,35.8 C3.4,34 0,31 0,26.5 C0,22 2,18 6.6,16 C6,12 7,7 11,4 Z" fill="#7f8285"/><ellipse cx="16.2" cy="9.6" rx="5.4" ry="4.7" fill="#3c3f41"/><ellipse cx="33.8" cy="9.6" rx="5.4" ry="4.7" fill="#3c3f41"/><path d="M10.6,22 C10.6,20 12,19 14,19 H36 C38,19 39.4,20 39.4,22 V30 C39.4,33 34,34.6 25,34.6 C16,34.6 10.6,33 10.6,30 Z" fill="#3c3f41"/><rect x="18" y="23.4" width="3.6" height="7" rx="1.4" fill="#7f8285"/><rect x="28.4" y="23.4" width="3.6" height="7" rx="1.4" fill="#7f8285"/></svg>
<svg style="left:1827.4px;top:1582.3px" width="20" height="27.4" viewBox="0 0 20 27.4"><g fill="none" stroke="#afb1b3" stroke-width="3"><path d="M4.6,4 V23"/><path d="M15.8,6 V9 C15.8,15.4 4.8,12.6 4.6,20"/></g><circle cx="4.6" cy="3.8" r="3.6" fill="#afb1b3"/><circle cx="4.6" cy="23.4" r="3.6" fill="#afb1b3"/><circle cx="15.8" cy="5.6" r="3.6" fill="#afb1b3"/></svg>
<svg style="left:1947px;top:1584.6px" width="24" height="21.4" viewBox="0 0 24 21.4"><rect x="7.6" y="9" width="15.4" height="12.2" fill="#afb1b3"/><path d="M1.6,8.6 V5.4 C1.6,0.6 9.4,0.6 9.4,5.4 V9.4" fill="none" stroke="#afb1b3" stroke-width="2.6"/></svg>
<svg style="left:1993.4px;top:1582.3px" width="33" height="30" viewBox="0 0 33 30"><path d="M7,20 C2.4,20 0,17 0,13.8 C0,10.8 2.2,8.4 5,8.2 C5.6,3.4 9.2,0 13.6,0 C17.4,0 20.4,2.2 21.8,5.6 C25.6,5.8 28.4,8.6 28.4,12.4 C28.4,13.8 28,15 27.4,16 C24,13.4 18.6,15 17.4,20 Z" fill="#afb1b3"/></svg>
<span style="position:absolute;left:2003.6px;top:1581.4px;font-size:18px;line-height:20px;font-weight:700;color:#3c3f41;will-change:transform;">?</span>
<div style="position:absolute;left:2009.6px;top:1595.8px;width:18.6px;height:18.6px;border-radius:50%;background:#3c3f41"></div>
<svg style="left:2011.9px;top:1598.1px" width="14" height="14" viewBox="-7 -7 14 14"><path d="M-1.41,-4.13 L-1.17,-5.78 L1.17,-5.78 L1.41,-4.13 L2.87,-3.29 L4.42,-3.91 L5.59,-1.88 L4.28,-0.84 L4.28,0.84 L5.59,1.88 L4.42,3.91 L2.87,3.29 L1.41,4.13 L1.17,5.78 L-1.17,5.78 L-1.41,4.13 L-2.87,3.29 L-4.42,3.91 L-5.59,1.88 L-4.28,0.84 L-4.28,-0.84 L-5.59,-1.88 L-4.42,-3.91 L-2.87,-3.29 Z M2.36,0 A2.36,2.36 0 1,0 -2.36,0 A2.36,2.36 0 1,0 2.36,0 Z" fill="#afb1b3" fill-rule="evenodd" stroke="#afb1b3" stroke-width="1.6" stroke-linejoin="round"/></svg>
<div style="position:absolute;left:127.8px;top:91.8px;width:24.4px;height:24.4px;border-radius:50%;background:#fe5f57"></div>
<div style="position:absolute;left:167.8px;top:91.8px;width:24.4px;height:24.4px;border-radius:50%;background:#febc2e"></div>
<div style="position:absolute;left:207.8px;top:91.8px;width:24.4px;height:24.4px;border-radius:50%;background:#28c840"></div>
<svg style="left:278px;top:145.4px" width="11" height="31.4" viewBox="0 0 11 31.4"><path d="M0.8,0.8 L9.6,15.6 L0.8,30.6" fill="none" stroke="#5e6a70" stroke-width="1.6"/></svg>
<svg style="left:406.2px;top:145.4px" width="11" height="31.4" viewBox="0 0 11 31.4"><path d="M0.8,0.8 L9.6,15.6 L0.8,30.6" fill="none" stroke="#5e6a70" stroke-width="1.6"/></svg>
<svg style="left:538px;top:145.4px" width="11" height="31.4" viewBox="0 0 11 31.4"><path d="M0.8,0.8 L9.6,15.6 L0.8,30.6" fill="none" stroke="#5e6a70" stroke-width="1.6"/></svg>
<svg style="left:561.7px;top:145.6px" width="20.6" height="28.6" viewBox="0 0 270 378"><circle cx="24" cy="57" r="24" fill="#73b9e0"/><circle cx="246" cy="57" r="24" fill="#73b9e0"/><circle cx="15" cy="199" r="16" fill="#d4a58a"/><circle cx="255" cy="199" r="16" fill="#d4a58a"/><circle cx="42" cy="356" r="18" fill="#d4a58a"/><circle cx="228" cy="356" r="18" fill="#d4a58a"/><path d="M135,0 C215,0 250,50 246,120 C244,170 256,220 252,280 C248,345 200,378 135,378 C70,378 22,345 18,280 C14,220 26,170 24,120 C20,50 55,0 135,0 Z" fill="#73b9e0"/><circle cx="87" cy="112" r="41" fill="#fff"/><circle cx="178" cy="112" r="38" fill="#fff"/><circle cx="91" cy="113" r="18" fill="#000"/><circle cx="181" cy="113" r="18" fill="#000"/><rect x="122" y="158" width="26" height="32" rx="6" fill="#fff"/><ellipse cx="135" cy="150" rx="22" ry="13" fill="#d9b79a"/><ellipse cx="135" cy="143" rx="15" ry="12" fill="#000"/></svg>
<svg style="left:869px;top:147px" width="30" height="25" viewBox="0 0 30 25"><ellipse cx="20.7" cy="4.8" rx="4.7" ry="5.4" fill="#afb1b3"/><path d="M17,9 H24.4 C24.2,11.6 25,12.4 26.6,13 C28.6,13.8 29.4,15.4 29.4,18.4 H17 Z" fill="#afb1b3"/><g stroke="#3c3f41" stroke-width="1.6"><ellipse cx="13" cy="7" rx="5.7" ry="6.6" fill="#afb1b3"/><path d="M0.9,24.2 C0.9,19 4,17.6 8,16.2 C10,15.5 10.5,14.5 10.4,12.6 H15.6 C15.5,14.5 16,15.5 18,16.2 C22,17.6 25.6,19 25.6,24.2 Z" fill="#afb1b3"/></g><ellipse cx="13" cy="7" rx="5.5" ry="6.4" fill="#afb1b3"/><rect x="0" y="24.2" width="27" height="2" fill="#3c3f41"/></svg>
<svg style="left:904px;top:158px" width="16" height="8.4" viewBox="0 0 16 8.4"><path d="M0,0 H16 L8,8.4 Z" fill="#afb1b3"/></svg>
<div style="position:absolute;left:936px;top:140px;width:2px;height:40px;background:#545658;"></div>
<svg style="left:953px;top:144px" width="33" height="31" viewBox="0 0 33 31"><path d="M1.27,13.08 L11.81,2.54 L19.06,1.88 L18.73,3.85 L13.79,8.47 L31.26,24.95 L26.64,29.89 L9.5,13.08 L5.22,17.04 Z" fill="#4ba35a"/></svg>
<div style="position:absolute;left:1008.5px;top:138.6px;width:239px;height:43px;box-sizing:border-box;border:2px solid #5e6060;border-radius:8px"></div>
<svg style="left:1275.8px;top:147.9px" width="20" height="24.4" viewBox="0 0 20 24.4"><path d="M0,0 L19.8,12.2 L0,24.4 Z" fill="#5a5c5e"/></svg>
<svg style="left:1323.8px;top:146px" width="24.4" height="28.4" viewBox="0 0 24.4 28.4"><g fill="#5a5c5e"><path d="M4.6,1.8 L7,-0.4 L12.4,5 L17.8,-0.4 L20.2,1.8 L14.2,8 H10.6 Z"/><path d="M6,11.6 C6,8 8.8,6 12.4,6 C16,6 18.8,8 18.8,11.6 V21.4 C18.8,25.4 15.8,28.2 12.4,28.2 C9,28.2 6,25.4 6,21.4 Z"/><rect x="0" y="8.8" width="24.4" height="3.4"/><rect x="0" y="14.8" width="24.4" height="3.4"/><rect x="0" y="20.6" width="24.4" height="3.6"/></g><rect x="8.4" y="12.5" width="8" height="2" fill="#3c3f41"/><rect x="8.4" y="18.5" width="8" height="2" fill="#3c3f41"/></svg>
<svg style="left:1374px;top:148px" width="30" height="28" viewBox="0 0 30 28"><path d="M0,2.6 L9.4,0 L20.2,2.6 V9 H12.6 V10.5 L10,12 V24 C3,20.6 0,15 0,9 Z" fill="#5a5c5e"/><path d="M12.6,9 H20.2 V11 L12.6,18 Z" fill="#3c3f41"/><path d="M10,12 L13,10.4 V20.6 L10,24 Z" fill="#3c3f41"/><path d="M15.8,10 L29.8,19 L15.8,28 Z" fill="#5a5c5e"/></svg>
<svg style="left:1421px;top:146px" width="32" height="31" viewBox="0 0 32 31"><circle cx="13" cy="13" r="10.8" fill="none" stroke="#5a5c5e" stroke-width="2.6"/><path d="M13.6,6.8 V13.4 L10,17" fill="none" stroke="#5a5c5e" stroke-width="2.2"/><path d="M14.6,9.4 L33,20.4 L14.6,32 Z" fill="#3c3f41"/><path d="M16.8,12.4 L30.8,21 L16.8,30 Z" fill="#5a5c5e"/></svg>
<svg style="left:1466px;top:157.7px" width="16" height="8.6" viewBox="0 0 16 8.6"><path d="M0,0 H16 L8,8.6 Z" fill="#afb1b3"/></svg>
<div style="position:absolute;left:1503.9px;top:149.9px;width:20.2px;height:20.2px;background:#5a5c5e;"></div>
<div style="position:absolute;left:1546.5px;top:140px;width:2px;height:40px;background:#545658;"></div>
<svg style="left:1626px;top:146px" width="26" height="26" viewBox="0 0 26 26"><path d="M21.2,1.4 L24.4,4.6 L9.6,19.4 L6.4,16.2 Z" fill="#3592c4"/><path d="M2,24 V9.8 L16.2,24 Z" fill="#3592c4"/></svg>
<svg style="left:1676px;top:146px" width="30" height="26" viewBox="0 0 30 26"><path d="M2.4,14.8 L10.4,22.4 L28.2,3.8" fill="none" stroke="#499c54" stroke-width="4.6"/></svg>
<svg style="left:1728px;top:146px" width="26" height="26" viewBox="0 0 26 26"><path d="M1.4,23 L4.6,26.2 L19.6,11.2 L16.4,8 Z" fill="#499c54"/><path d="M24,4 V17.6 L10.4,4 Z" fill="#499c54"/></svg>
<svg style="left:1780px;top:145.7px" width="28" height="28" viewBox="0 0 28 28"><circle cx="14" cy="14" r="12" fill="none" stroke="#5a5c5e" stroke-width="4"/><path d="M14,7 V14.4 L19.6,18" fill="none" stroke="#5a5c5e" stroke-width="3"/></svg>
<svg style="left:1833px;top:145px" width="30" height="29" viewBox="0 0 30 29"><path d="M10,1.2 V17 L0.8,9.2 Z" fill="#afb1b3"/><path d="M9,9.2 H17.4 A8.3,8.3 0 0 1 17.4,25.8 H9" fill="none" stroke="#afb1b3" stroke-width="4"/></svg>
<div style="position:absolute;left:1878px;top:140px;width:2px;height:40px;background:#545658;"></div>
<svg style="left:1896px;top:144px" width="32" height="32" viewBox="0 0 32 32"><circle cx="13.6" cy="13.4" r="9.6" fill="none" stroke="#afb1b3" stroke-width="4"/><path d="M20.4,20.6 L29.4,29" stroke="#afb1b3" stroke-width="4.6"/></svg>
<svg style="left:1950.9px;top:147px" width="26" height="26" viewBox="-13 -13 26 26"><path d="M-2.88,-8.40 L-2.38,-11.76 L2.38,-11.76 L2.88,-8.40 L5.84,-6.69 L8.99,-7.95 L11.38,-3.82 L8.71,-1.71 L8.71,1.71 L11.38,3.82 L8.99,7.95 L5.84,6.69 L2.88,8.40 L2.38,11.76 L-2.38,11.76 L-2.88,8.40 L-5.84,6.69 L-8.99,7.95 L-11.38,3.82 L-8.71,1.71 L-8.71,-1.71 L-11.38,-3.82 L-8.99,-7.95 L-5.84,-6.69 Z M4.80,0 A4.80,4.80 0 1,0 -4.80,0 A4.80,4.80 0 1,0 4.80,0 Z" fill="#afb1b3" fill-rule="evenodd" stroke="#afb1b3" stroke-width="1.6" stroke-linejoin="round"/></svg>
<svg style="left:2001px;top:145px" width="30" height="30" viewBox="0 0 30 30"><defs><linearGradient id="lg1" x1="0" y1="0" x2="0.3" y2="1"><stop offset="0" stop-color="#fbf23c"/><stop offset="0.5" stop-color="#9be08a"/><stop offset="1" stop-color="#22c3e6"/></linearGradient><linearGradient id="lg2" x1="0" y1="0" x2="1" y2="0.6"><stop offset="0" stop-color="#2bd07a"/><stop offset="1" stop-color="#1a8df0"/></linearGradient><linearGradient id="lg3" x1="1" y1="0" x2="0" y2="1"><stop offset="0" stop-color="#1a47b0"/><stop offset="1" stop-color="#19a5e6"/></linearGradient></defs><path d="M3.6,1 C13,1.4 23,5.6 29,13 C24,21 15,27 6.4,29 C-0.4,21 -0.8,9 3.6,1 Z" fill="url(#lg1)"/><path d="M3.6,1 C13,1.4 23,5.6 29,13 L18,12.8 C14,8 9,3.6 3.6,1 Z" fill="url(#lg2)"/><path d="M29,13 C24,21 15,27 6.4,29 C12,24.4 16,18.6 18,12.8 Z" fill="url(#lg3)"/></svg>
<div style="position:absolute;left:112px;top:76px;width:1934px;height:1539px;border-radius:21px;box-sizing:border-box;box-shadow:inset 0 0 0 1.6px rgba(255,255,255,0.20), inset 0 1.2px 0 0.6px rgba(255,255,255,0.16);"></div>
<span class="t" style="left:217.2px;top:197.3px;font-size:27px;color:#bbbbbb;letter-spacing:0.54px;">Project</span>
<span class="t" style="left:241.6px;top:245.3px;font-size:27px;color:#bbbbbb;font-weight:700;-webkit-text-stroke:0;letter-spacing:0.27px;">workspace</span>
<span class="t" style="left:274.6px;top:285.3px;font-size:27px;color:#bbbbbb;letter-spacing:0.21px;">.idea</span>
<span class="t" style="left:275.6px;top:325.3px;font-size:27px;color:#bbbbbb;letter-spacing:0.39px;">example</span>
<span class="t" style="left:310.6px;top:365.3px;font-size:27px;color:#bbbbbb;letter-spacing:0.21px;">.idea</span>
<span class="t" style="left:311.6px;top:405.3px;font-size:27px;color:#bbbbbb;letter-spacing:0.79px;">appengine-hello</span>
<span class="t" style="left:311.6px;top:445.3px;font-size:27px;color:#bbbbbb;letter-spacing:0.99px;">gotypes</span>
<span class="t" style="left:311.6px;top:485.3px;font-size:27px;color:#bbbbbb;letter-spacing:0.74px;">hello</span>
<span class="t" style="left:311.6px;top:525.3px;font-size:27px;color:#bbbbbb;letter-spacing:0.87px;">outyet</span>
<span class="t" style="left:312.6px;top:565.3px;font-size:27px;color:#bbbbbb;letter-spacing:0.98px;">stringutil</span>
<span class="t" style="left:347.8px;top:605.3px;font-size:27px;color:#bbbbbb;letter-spacing:0.40px;">reverse.go</span>
<span class="t" style="left:347.8px;top:645.3px;font-size:27px;color:#bbbbbb;letter-spacing:0.51px;">reverse_test.go</span>
<span class="t" style="left:348.8px;top:685.3px;font-size:27px;color:#62a35c;letter-spacing:0.73px;">toupper.go</span>
<span class="t" style="left:312.6px;top:725.3px;font-size:27px;color:#bbbbbb;letter-spacing:0.69px;">template</span>
<span class="t" style="left:311.6px;top:765.3px;font-size:27px;color:#bbbbbb;letter-spacing:0.67px;">go.mod</span>
<span class="t" style="left:310.6px;top:805.3px;font-size:27px;color:#bbbbbb;letter-spacing:-0.89px;">LICENSE</span>
<span class="t" style="left:310.6px;top:845.3px;font-size:27px;color:#bbbbbb;letter-spacing:-0.46px;">README.md</span>
<span class="t" style="left:275.6px;top:885.3px;font-size:27px;color:#bbbbbb;letter-spacing:0.84px;">hello</span>
<span class="t" style="left:310.6px;top:925.3px;font-size:27px;color:#bbbbbb;letter-spacing:0.21px;">.idea</span>
<span class="t" style="left:311.6px;top:965.3px;font-size:27px;color:#bbbbbb;letter-spacing:0.67px;">go.mod</span>
<span class="t" style="left:311.6px;top:1005.3px;font-size:27px;color:#bbbbbb;letter-spacing:0.44px;">main.go</span>
<span class="t" style="left:275.6px;top:1045.3px;font-size:27px;color:#bbbbbb;letter-spacing:0.33px;">go.work</span>
<span class="t" style="left:238.6px;top:1085.3px;font-size:27px;color:#bbbbbb;letter-spacing:0.40px;">External Libraries</span>
<span class="t" style="left:239.6px;top:1125.3px;font-size:27px;color:#bbbbbb;letter-spacing:0.38px;">Scratches and Consoles</span>
<span class="t" style="left:395.0px;top:245.3px;font-size:27px;color:#8c8c8c;letter-spacing:0.67px;">~/Desktop/workspace</span>
<span class="t" style="left:120.4px;top:277.6px;font-size:22.5px;color:#ffffff;line-height:24px;height:24px;transform-origin:0 0;transform:rotate(-90deg);letter-spacing:0.15px;">Project</span>
<span class="t" style="left:120.4px;top:431.7px;font-size:22.5px;color:#bbbbbb;line-height:24px;height:24px;transform-origin:0 0;transform:rotate(-90deg);letter-spacing:-0.07px;">Commit</span>
<span class="t" style="left:120.4px;top:1303.3px;font-size:22.5px;color:#bbbbbb;line-height:24px;height:24px;transform-origin:0 0;transform:rotate(-90deg);letter-spacing:0.10px;">Bookmarks</span>
<span class="t" style="left:120.4px;top:1475.3px;font-size:22.5px;color:#bbbbbb;line-height:24px;height:24px;transform-origin:0 0;transform:rotate(-90deg);letter-spacing:-0.31px;">Structure</span>
<span class="t" style="left:2037.0px;top:246.4px;font-size:22.5px;color:#bbbbbb;line-height:24px;height:24px;transform-origin:0 0;transform:rotate(90deg);letter-spacing:0.16px;">GitHub Copilot</span>
<span class="t" style="left:2037.0px;top:475.7px;font-size:22.5px;color:#bbbbbb;line-height:24px;height:24px;transform-origin:0 0;transform:rotate(90deg);letter-spacing:-0.12px;">Database</span>
<span class="t" style="left:2037.0px;top:650.8px;font-size:22.5px;color:#bbbbbb;line-height:24px;height:24px;transform-origin:0 0;transform:rotate(90deg);letter-spacing:0.32px;">Notifications</span>
<span class="t" style="left:732.5px;top:196.3px;font-size:22.5px;color:#62a35c;letter-spacing:0.39px;">toupper.go</span>
<span class="t" style="left:942.0px;top:196.3px;font-size:22.5px;color:#bbbbbb;letter-spacing:0.24px;">hello/go.mod</span>
<span class="t" style="left:1174.6px;top:196.3px;font-size:22.5px;color:#bbbbbb;">example/go.mod</span>
<span class="t m" style="left:685.5px;top:248.7px;font-size:23px;color:#606366;-webkit-text-stroke:0.15px currentColor;">1</span>
<span class="t m" style="left:685.5px;top:290.7px;font-size:23px;color:#606366;-webkit-text-stroke:0.15px currentColor;">2</span>
<span class="t m" style="left:685.5px;top:332.7px;font-size:23px;color:#606366;-webkit-text-stroke:0.15px currentColor;">3</span>
<span class="t m" style="left:685.5px;top:374.7px;font-size:23px;color:#606366;-webkit-text-stroke:0.15px currentColor;">4</span>
<span class="t m" style="left:685.5px;top:416.7px;font-size:23px;color:#606366;-webkit-text-stroke:0.15px currentColor;">5</span>
<span class="t m" style="left:685.5px;top:458.7px;font-size:23px;color:#606366;-webkit-text-stroke:0.15px currentColor;">6</span>
<span class="t m" style="left:685.5px;top:500.7px;font-size:23px;color:#606366;-webkit-text-stroke:0.15px currentColor;">7</span>
<span class="t m" style="left:685.5px;top:542.7px;font-size:23px;color:#606366;-webkit-text-stroke:0.15px currentColor;">8</span>
<span class="t m" style="left:685.5px;top:584.7px;font-size:23px;color:#a4a3a3;-webkit-text-stroke:0.15px currentColor;">9</span>
<span class="t m" style="left:785.7px;top:248.3px;font-size:25px;color:#cc7832;letter-spacing:-0.6px;">package </span>
<span class="t m" style="left:900.9px;top:248.3px;font-size:25px;color:#afbf7e;letter-spacing:-0.6px;">stringutil</span>
<span class="t m" style="left:785.7px;top:332.3px;font-size:25px;color:#cc7832;letter-spacing:-0.6px;">import </span>
<span class="t m" style="left:886.5px;top:332.3px;font-size:25px;color:#6a8759;letter-spacing:-0.6px;">"strings"</span>
<span class="t m" style="left:785.7px;top:416.3px;font-size:25px;color:#808080;letter-spacing:-0.6px;">// ToUpper uppercases argument string.</span>
<span class="t m" style="left:785.7px;top:458.3px;font-size:25px;color:#cc7832;letter-spacing:-0.6px;">func </span>
<span class="t m" style="left:857.7px;top:458.3px;font-size:25px;color:#ffc66d;letter-spacing:-0.6px;">ToUpper</span>
<span class="t m" style="left:958.5px;top:458.3px;font-size:25px;color:#a9b7c6;letter-spacing:-0.6px;">(s </span>
<span class="t m" style="left:1001.7px;top:458.3px;font-size:25px;color:#cc7832;letter-spacing:-0.6px;">string</span>
<span class="t m" style="left:1088.1px;top:458.3px;font-size:25px;color:#a9b7c6;letter-spacing:-0.6px;">) </span>
<span class="t m" style="left:1116.9px;top:458.3px;font-size:25px;color:#cc7832;letter-spacing:-0.6px;">string</span>
<span class="t m" style="left:1203.3px;top:458.3px;font-size:25px;color:#a9b7c6;letter-spacing:-0.6px;"> {</span>
<span class="t m" style="left:785.7px;top:500.3px;font-size:25px;color:#cc7832;letter-spacing:-0.6px;">    return </span>
<span class="t m" style="left:944.1px;top:500.3px;font-size:25px;color:#afbf7e;letter-spacing:-0.6px;">strings</span>
<span class="t m" style="left:1044.9px;top:500.3px;font-size:25px;color:#a9b7c6;letter-spacing:-0.6px;">.</span>
<span class="t m" style="left:1059.3px;top:500.3px;font-size:25px;color:#b09d79;letter-spacing:-0.6px;">ToUpper</span>
<span class="t m" style="left:1160.1px;top:500.3px;font-size:25px;color:#a9b7c6;letter-spacing:-0.6px;">(s)</span>
<span class="t m" style="left:785.7px;top:542.3px;font-size:25px;color:#a9b7c6;letter-spacing:-0.6px;">}</span>
<span class="t" style="left:1897.6px;top:250.5px;font-size:22.5px;color:#bbbbbb;">1</span>
<span class="t" style="left:167.0px;top:1267.3px;font-size:27px;color:#bbbbbb;letter-spacing:0.33px;">Terminal:</span>
<span class="t" style="left:314.0px;top:1267.3px;font-size:27px;color:#bbbbbb;letter-spacing:0.99px;">Local</span>
<span class="t m" style="left:203.7px;top:1318.1px;font-size:25px;color:#0aa5a8;font-weight:700;letter-spacing:-1.0px;">workspace</span>
<span class="t m" style="left:329.7px;top:1318.1px;font-size:25px;color:#bbbbbb;letter-spacing:-1.0px;"> go run example.com/hello</span>
<span class="t m" style="left:161.7px;top:1360.1px;font-size:25px;color:#bbbbbb;letter-spacing:-1.0px;">HELLO</span>
<span class="t m" style="left:203.7px;top:1402.1px;font-size:25px;color:#0aa5a8;font-weight:700;letter-spacing:-1.0px;">workspace</span>
<span class="t" style="left:203.6px;top:1534.6px;font-size:22.5px;color:#bbbbbb;letter-spacing:-0.26px;">Git</span>
<span class="t" style="left:306.9px;top:1534.6px;font-size:22.5px;color:#bbbbbb;letter-spacing:-1.26px;">TODO</span>
<span class="t" style="left:441.8px;top:1534.6px;font-size:22.5px;color:#bbbbbb;">Problems</span>
<span class="t" style="left:615.2px;top:1534.6px;font-size:22.5px;color:#ffffff;letter-spacing:-0.13px;">Terminal</span>
<span class="t" style="left:775.7px;top:1534.6px;font-size:22.5px;color:#bbbbbb;letter-spacing:0.04px;">Services</span>
<span class="t" style="left:937.9px;top:1534.6px;font-size:22.5px;color:#bbbbbb;letter-spacing:0.09px;">Profiler</span>
<span class="t" style="left:174.0px;top:1576.5px;font-size:22.5px;color:#bbbbbb;letter-spacing:0.04px;">Go code is now formatted on save: Every time a Go file is saved, the IDE formats it automatically. You can c... (today 2:54 PM)</span>
<span class="t" style="left:1571.3px;top:1576.5px;font-size:22.5px;color:#bbbbbb;letter-spacing:-0.28px;">9:1</span>
<span class="t" style="left:1625.9px;top:1576.5px;font-size:22.5px;color:#bbbbbb;letter-spacing:-1.42px;">LF</span>
<span class="t" style="left:1673.4px;top:1576.5px;font-size:22.5px;color:#bbbbbb;letter-spacing:0.57px;">UTF-8</span>
<span class="t" style="left:1764.5px;top:1576.5px;font-size:22.5px;color:#bbbbbb;letter-spacing:-0.63px;">Tab</span>
<span class="t" style="left:1858.0px;top:1576.5px;font-size:22.5px;color:#bbbbbb;letter-spacing:0.11px;">master</span>
<span class="t" style="left:924.0px;top:83.3px;font-size:26px;color:#a9abad;font-weight:700;-webkit-text-stroke:0;letter-spacing:0.53px;">workspace – toupper.go</span>
<span class="t" style="left:137.7px;top:139.3px;font-size:25px;color:#bbbbbb;font-weight:700;-webkit-text-stroke:0;letter-spacing:0.07px;">workspace</span>
<span class="t" style="left:301.9px;top:139.3px;font-size:25px;color:#bbbbbb;letter-spacing:-0.02px;">example</span>
<span class="t" style="left:430.7px;top:139.3px;font-size:25px;color:#bbbbbb;letter-spacing:0.70px;">stringutil</span>
<span class="t" style="left:594.5px;top:139.3px;font-size:25px;color:#62a35c;letter-spacing:0.39px;">toupper.go</span>
<span class="t" style="left:1026.3px;top:140.1px;font-size:22px;color:#bbbbbb;letter-spacing:0.36px;">Add Configuration...</span>
<span class="t" style="left:1565.4px;top:140.2px;font-size:22px;color:#bbbbbb;letter-spacing:0.66px;">Git:</span>
</div></div>
</body></html>
